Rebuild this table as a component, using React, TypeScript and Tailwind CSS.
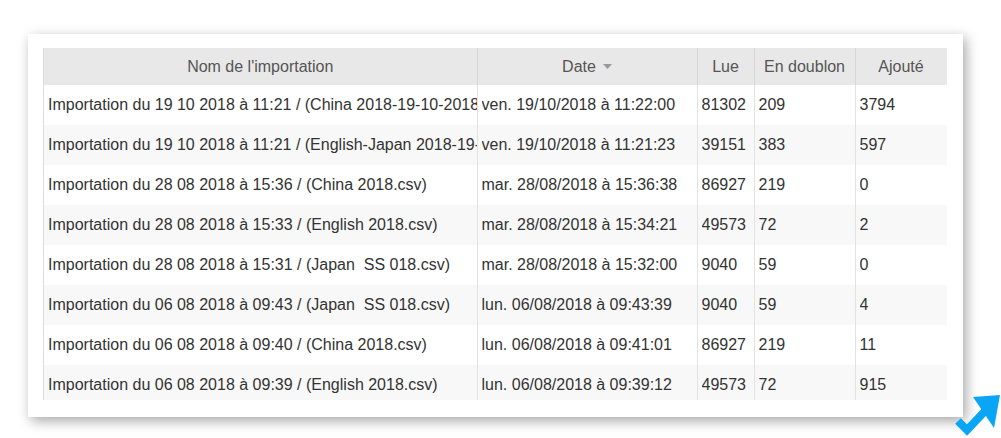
import React from "react";

const rows = [
  ["Importation du 19 10 2018 à 11:21 / (China 2018-19-10-2018", "ven. 19/10/2018 à 11:22:00", "81302", "209", "3794"],
  ["Importation du 19 10 2018 à 11:21 / (English-Japan 2018-19-", "ven. 19/10/2018 à 11:21:23", "39151", "383", "597"],
  ["Importation du 28 08 2018 à 15:36 / (China 2018.csv)", "mar. 28/08/2018 à 15:36:38", "86927", "219", "0"],
  ["Importation du 28 08 2018 à 15:33 / (English 2018.csv)", "mar. 28/08/2018 à 15:34:21", "49573", "72", "2"],
  ["Importation du 28 08 2018 à 15:31 / (Japan  SS 018.csv)", "mar. 28/08/2018 à 15:32:00", "9040", "59", "0"],
  ["Importation du 06 08 2018 à 09:43 / (Japan  SS 018.csv)", "lun. 06/08/2018 à 09:43:39", "9040", "59", "4"],
  ["Importation du 06 08 2018 à 09:40 / (China 2018.csv)", "lun. 06/08/2018 à 09:41:01", "86927", "219", "11"],
  ["Importation du 06 08 2018 à 09:39 / (English 2018.csv)", "lun. 06/08/2018 à 09:39:12", "49573", "72", "915"],
];

const App = () => {
  return (
    <main className="relative h-[438px] w-[1001px] bg-white pl-[28px] pt-[34px] font-['Liberation_Sans',Arial,sans-serif] text-[16px]">
      <div className="w-[935px] h-[383px] bg-white shadow-[3px_4px_12px_rgba(0,0,0,0.35)] pl-[15px] pt-[14px]">
        <div className="w-[904px] h-[352px] overflow-hidden border-l border-[#dcdcdc]">
          <table className="table-fixed border-collapse w-[903px]">
            <colgroup>
              <col className="w-[433px]" />
              <col className="w-[220px]" />
              <col className="w-[57px]" />
              <col className="w-[101px]" />
              <col className="w-[92px]" />
            </colgroup>
            <thead>
              <tr className="h-[37px] bg-[#e8e8e8] text-[#555]">
                <th className="font-normal text-center border-r border-[#d6d6d6]">Nom de l'importation</th>
                <th className="font-normal text-center border-r border-[#d6d6d6]">
                  <span className="inline-flex items-center gap-[7px]">
                    Date
                    <svg width="9" height="5" viewBox="0 0 9 5">
                      <path d="M0 0h9L4.5 5z" fill="#999" />
                    </svg>
                  </span>
                </th>
                <th className="font-normal text-center border-r border-[#d6d6d6]">Lue</th>
                <th className="font-normal text-center border-r border-[#d6d6d6]">En doublon</th>
                <th className="font-normal text-center border-r border-[#d6d6d6]">Ajouté</th>
              </tr>
            </thead>
            <tbody className="text-[#333]">
              {rows.map((r, i) => (
                <tr key={i} className={i % 2 === 0 ? "h-[40px] bg-white" : "h-[40px] bg-[#f8f8f8]"}>
                  {r.map((c, j) => (
                    <td key={j} className="pl-[4px] border-r border-[#e2e2e2]">
                      <div className="whitespace-pre overflow-hidden">{c}</div>
                    </td>
                  ))}
                </tr>
              ))}
            </tbody>
          </table>
        </div>
      </div>
      <svg className="absolute left-[955px] top-[394px]" width="46" height="44" viewBox="0 0 46 44">
        <polygon points="18,3 45,1 39,34" fill="#0aa6f5" />
        <polyline points="3,27 12,36 32,15" fill="none" stroke="#0aa6f5" strokeWidth="8" strokeLinejoin="miter" />
      </svg>
    </main>
  );
};

export default App;
